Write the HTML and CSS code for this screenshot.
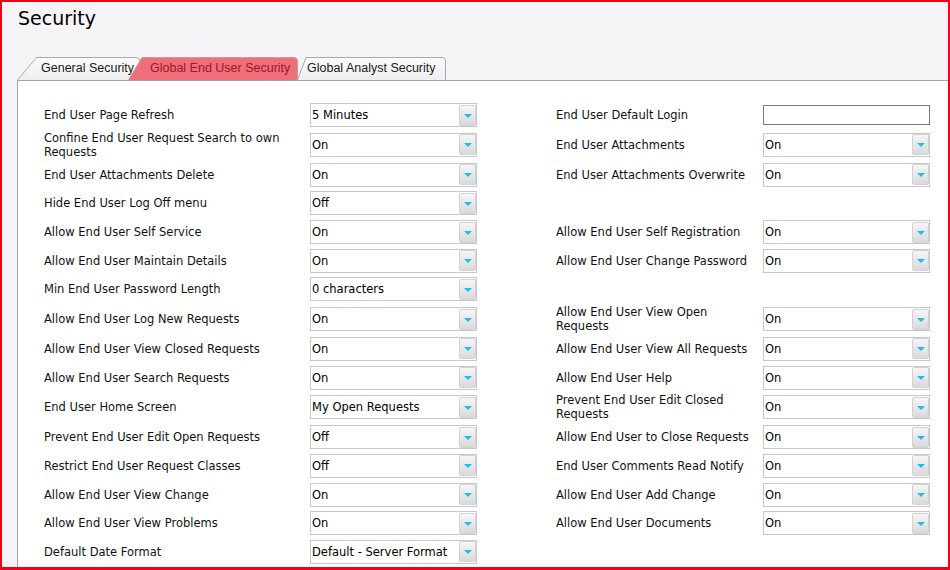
FILE: index.html
```html
<!DOCTYPE html>
<html>
<head>
<meta charset="utf-8">
<title>Security</title>
<link rel="stylesheet" href="styles.css">
</head>
<body>
<div class="page">
  <h1 class="title">Security</h1>
  <div class="tabs">
    <div class="tab tab--general">General Security</div>
    <div class="tab tab--active">Global End User Security</div>
    <div class="tab tab--analyst">Global Analyst Security</div>
  </div>
  <div class="panel">
    <div class="row">
      <div class="label">End User Page Refresh</div>
      <div class="select"><span class="select-value">5 Minutes</span><span class="select-btn"><span class="caret"></span></span></div>
      <div class="label label--right">End User Default Login</div>
      <div class="textbox"></div>
    </div>
    <div class="row row--tall">
      <div class="label">Confine End User Request Search to own<br>Requests</div>
      <div class="select"><span class="select-value">On</span><span class="select-btn"><span class="caret"></span></span></div>
      <div class="label label--right">End User Attachments</div>
      <div class="select"><span class="select-value">On</span><span class="select-btn"><span class="caret"></span></span></div>
    </div>
    <div class="row">
      <div class="label">End User Attachments Delete</div>
      <div class="select"><span class="select-value">On</span><span class="select-btn"><span class="caret"></span></span></div>
      <div class="label label--right">End User Attachments Overwrite</div>
      <div class="select"><span class="select-value">On</span><span class="select-btn"><span class="caret"></span></span></div>
    </div>
    <div class="row">
      <div class="label">Hide End User Log Off menu</div>
      <div class="select"><span class="select-value">Off</span><span class="select-btn"><span class="caret"></span></span></div>
    </div>
    <div class="row">
      <div class="label">Allow End User Self Service</div>
      <div class="select"><span class="select-value">On</span><span class="select-btn"><span class="caret"></span></span></div>
      <div class="label label--right">Allow End User Self Registration</div>
      <div class="select"><span class="select-value">On</span><span class="select-btn"><span class="caret"></span></span></div>
    </div>
    <div class="row">
      <div class="label">Allow End User Maintain Details</div>
      <div class="select"><span class="select-value">On</span><span class="select-btn"><span class="caret"></span></span></div>
      <div class="label label--right">Allow End User Change Password</div>
      <div class="select"><span class="select-value">On</span><span class="select-btn"><span class="caret"></span></span></div>
    </div>
    <div class="row">
      <div class="label">Min End User Password Length</div>
      <div class="select"><span class="select-value">0 characters</span><span class="select-btn"><span class="caret"></span></span></div>
    </div>
    <div class="row row--tall">
      <div class="label">Allow End User Log New Requests</div>
      <div class="select"><span class="select-value">On</span><span class="select-btn"><span class="caret"></span></span></div>
      <div class="label label--right">Allow End User View Open<br>Requests</div>
      <div class="select"><span class="select-value">On</span><span class="select-btn"><span class="caret"></span></span></div>
    </div>
    <div class="row">
      <div class="label">Allow End User View Closed Requests</div>
      <div class="select"><span class="select-value">On</span><span class="select-btn"><span class="caret"></span></span></div>
      <div class="label label--right">Allow End User View All Requests</div>
      <div class="select"><span class="select-value">On</span><span class="select-btn"><span class="caret"></span></span></div>
    </div>
    <div class="row">
      <div class="label">Allow End User Search Requests</div>
      <div class="select"><span class="select-value">On</span><span class="select-btn"><span class="caret"></span></span></div>
      <div class="label label--right">Allow End User Help</div>
      <div class="select"><span class="select-value">On</span><span class="select-btn"><span class="caret"></span></span></div>
    </div>
    <div class="row row--tall">
      <div class="label">End User Home Screen</div>
      <div class="select"><span class="select-value">My Open Requests</span><span class="select-btn"><span class="caret"></span></span></div>
      <div class="label label--right">Prevent End User Edit Closed<br>Requests</div>
      <div class="select"><span class="select-value">On</span><span class="select-btn"><span class="caret"></span></span></div>
    </div>
    <div class="row">
      <div class="label">Prevent End User Edit Open Requests</div>
      <div class="select"><span class="select-value">Off</span><span class="select-btn"><span class="caret"></span></span></div>
      <div class="label label--right">Allow End User to Close Requests</div>
      <div class="select"><span class="select-value">On</span><span class="select-btn"><span class="caret"></span></span></div>
    </div>
    <div class="row">
      <div class="label">Restrict End User Request Classes</div>
      <div class="select"><span class="select-value">Off</span><span class="select-btn"><span class="caret"></span></span></div>
      <div class="label label--right">End User Comments Read Notify</div>
      <div class="select"><span class="select-value">On</span><span class="select-btn"><span class="caret"></span></span></div>
    </div>
    <div class="row">
      <div class="label">Allow End User View Change</div>
      <div class="select"><span class="select-value">On</span><span class="select-btn"><span class="caret"></span></span></div>
      <div class="label label--right">Allow End User Add Change</div>
      <div class="select"><span class="select-value">On</span><span class="select-btn"><span class="caret"></span></span></div>
    </div>
    <div class="row">
      <div class="label">Allow End User View Problems</div>
      <div class="select"><span class="select-value">On</span><span class="select-btn"><span class="caret"></span></span></div>
      <div class="label label--right">Allow End User Documents</div>
      <div class="select"><span class="select-value">On</span><span class="select-btn"><span class="caret"></span></span></div>
    </div>
    <div class="row">
      <div class="label">Default Date Format</div>
      <div class="select"><span class="select-value">Default - Server Format</span><span class="select-btn"><span class="caret"></span></span></div>
    </div>
  </div>
</div>
</body>
</html>
```

FILE: styles.css
```css
* { box-sizing: border-box; }

html, body {
  margin: 0;
  padding: 0;
}

body {
  font-family: "DejaVu Sans", Verdana, sans-serif;
  color: #111;
  background: #fff;
}

.page {
  width: 950px;
  height: 570px;
  border: 2px solid #f50019;
  border-bottom-width: 3px;
  background: #f5f3f6;
  display: flex;
  flex-direction: column;
  overflow: hidden;
}

.title {
  margin: 5px 0 0 16px;
  font-size: 19px;
  line-height: 23px;
  font-weight: normal;
  color: #000;
}

.tabs {
  display: flex;
  margin: 27px 0 0 15px;
  height: 23px;
}

.tab {
  height: 23px;
  line-height: 22px;
  font-family: "Liberation Sans", Arial, sans-serif;
  font-size: 12.5px;
  color: #1a1a1a;
  background-repeat: no-repeat;
  white-space: nowrap;
}

.tab--general {
  width: 123px;
  padding-left: 24px;
  background-image: url("data:image/svg+xml,%3Csvg xmlns='http://www.w3.org/2000/svg' width='123' height='23'%3E%3Cdefs%3E%3ClinearGradient id='g' x1='0' y1='0' x2='0' y2='1'%3E%3Cstop offset='0' stop-color='%23fbfbfb'/%3E%3Cstop offset='1' stop-color='%23efefef'/%3E%3C/linearGradient%3E%3C/defs%3E%3Cpath d='M0.5 23 L19.5 0.5 H119 Q122.5 0.5 122.5 4 V23' fill='url(%23g)' stroke='%23a9a9a9'/%3E%3C/svg%3E");
}

.tab--active {
  width: 170px;
  margin-left: -12px;
  padding-left: 22px;
  color: #a0182c;
  background-image: url("data:image/svg+xml,%3Csvg xmlns='http://www.w3.org/2000/svg' width='170' height='23'%3E%3Cpath d='M0.5 23 L14 0.5 H166 Q169.5 0.5 169.5 4 V23' fill='%23ef6e7a' stroke='%23c99aa0'/%3E%3C/svg%3E");
}

.tab--analyst {
  width: 149px;
  margin-left: -1px;
  padding-left: 10px;
  background-image: url("data:image/svg+xml,%3Csvg xmlns='http://www.w3.org/2000/svg' width='149' height='23'%3E%3Cdefs%3E%3ClinearGradient id='g' x1='0' y1='0' x2='0' y2='1'%3E%3Cstop offset='0' stop-color='%23fbfbfb'/%3E%3Cstop offset='1' stop-color='%23efefef'/%3E%3C/linearGradient%3E%3C/defs%3E%3Cpath d='M0.5 23 L9 0.5 H145 Q148.5 0.5 148.5 4 V23' fill='url(%23g)' stroke='%23a9a9a9'/%3E%3C/svg%3E");
}

.panel {
  flex: 1;
  margin-left: 15px;
  background: #fff;
  border-top: 1px solid #a4a4a4;
  border-left: 1px solid #a4a4a4;
  padding: 19.8px 0 0 26px;
}

.row {
  display: grid;
  grid-template-columns: 266px 167px 79px 207px 167px;
  align-items: center;
  height: 28.73px;
}

.row--tall {
  height: 30.73px;
}

.label {
  grid-column: 1;
  font-size: 11.5px;
  line-height: 14px;
  color: #111;
}

.label--right {
  grid-column: 4;
}

.select {
  display: flex;
  align-items: center;
  height: 24px;
  width: 167px;
  border: 1px solid #c7c7cd;
  background: #fff;
}

.select-value {
  flex: 1;
  padding-left: 1px;
  font-size: 11.5px;
  color: #000;
  white-space: nowrap;
  overflow: hidden;
}

.select-btn {
  width: 17px;
  height: 21px;
  border: 1px solid #d2d2d6;
  border-radius: 2px;
  background: linear-gradient(#f6f6f6, #d9d9dc);
  display: flex;
  align-items: center;
  justify-content: center;
  padding-top: 1px;
}

.caret {
  width: 0;
  height: 0;
  border-left: 4px solid transparent;
  border-right: 4px solid transparent;
  border-top: 4px solid #19bff0;
}

.textbox {
  width: 167px;
  height: 20px;
  border: 1px solid #7a7a7a;
  background: #fff;
}
```
